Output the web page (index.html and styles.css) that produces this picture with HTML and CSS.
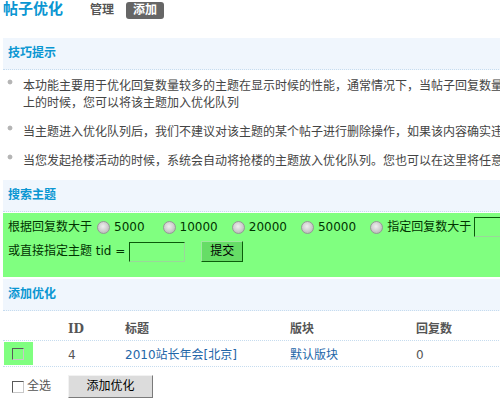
FILE: index.html
```html
<!DOCTYPE html>
<html lang="zh-CN">
<head>
<meta charset="utf-8">
<title>帖子优化</title>
<link rel="stylesheet" href="styles.css">
</head>
<body>
<div class="page">
  <div class="topbar">
    <h3 class="title">帖子优化</h3>
    <ul class="tabs">
      <li><a class="tab" href="#">管理</a></li>
      <li><a class="tab current" href="#">添加</a></li>
    </ul>
  </div>

  <div class="panel-head">技巧提示</div>
  <ul class="tips">
    <li>本功能主要用于优化回复数量较多的主题在显示时候的性能，通常情况下，当帖子回复数量在 10000 以<br>上的时候，您可以将该主题加入优化队列</li>
    <li>当主题进入优化队列后，我们不建议对该主题的某个帖子进行删除操作，如果该内容确实违规，建议采用屏蔽的方式处理</li>
    <li>当您发起抢楼活动的时候，系统会自动将抢楼的主题放入优化队列。您也可以在这里将任意主题加入优化队列</li>
  </ul>

  <div class="panel-head">搜索主题</div>
  <form class="search">
    <div class="search-row">
      <span>根据回复数大于</span>
      <label class="opt opt-first"><input type="radio" name="n" class="radio">5000</label>
      <label class="opt"><input type="radio" name="n" class="radio">10000</label>
      <label class="opt"><input type="radio" name="n" class="radio">20000</label>
      <label class="opt"><input type="radio" name="n" class="radio">50000</label>
      <label class="opt"><input type="radio" name="n" class="radio">指定回复数大于</label>
      <input type="text" class="field field-num">
    </div>
    <div class="search-row search-row-2">
      <span>或直接指定主题 tid =</span>
      <input type="text" class="field">
      <button type="button" class="btn-submit">提交</button>
    </div>
  </form>

  <div class="panel-head panel-add">添加优化</div>
  <div class="list">
    <div class="row row-head">
      <div class="c c-check"></div>
      <div class="c c-id">ID</div>
      <div class="c c-title">标题</div>
      <div class="c c-forum">版块</div>
      <div class="c c-replies">回复数</div>
    </div>
    <div class="row row-data">
      <div class="c c-check"><span class="check-cell"><input type="checkbox" class="check"></span></div>
      <div class="c c-id">4</div>
      <div class="c c-title"><a href="#" class="link">2010站长年会[北京]</a></div>
      <div class="c c-forum"><a href="#" class="link">默认版块</a></div>
      <div class="c c-replies">0</div>
    </div>
  </div>

  <div class="actions">
    <label class="all"><input type="checkbox" class="check check-white">全选</label>
    <button type="button" class="btn-add">添加优化</button>
  </div>
</div>
</body>
</html>
```
FILE: styles.css
```css
html, body {
  margin: 0;
  padding: 0;
  overflow: hidden;
  background: #fff;
}

body {
  font-family: "DejaVu Sans", "Noto Sans CJK SC", sans-serif;
  font-size: 12px;
  line-height: 17px;
  color: #444;
}

.page {
  width: 700px;
  padding: 0 3px;
}

/* top bar */
.topbar {
  display: flex;
  align-items: flex-start;
  height: 20px;
  margin-bottom: 18px;
}

.title {
  margin: 0 20px 0 0;
  font-size: 15px;
  line-height: 18px;
  font-weight: bold;
  color: #0a96d2;
}

.tabs {
  display: flex;
  gap: 5px;
  list-style: none;
  margin: 2px 0 0;
  padding: 0;
}

.tab {
  display: block;
  padding: 0 7px;
  line-height: 17px;
  font-weight: bold;
  color: #555;
  text-decoration: none;
  border-radius: 3px;
}

.tab.current {
  background: #666;
  color: #fff;
}

/* panel headers */
.panel-head {
  height: 31px;
  line-height: 31px;
  padding-left: 5px;
  background: #f0f6fd;
  border-bottom: 1px dotted #c6dcef;
  color: #0a96d2;
  font-weight: bold;
}

.panel-add {
  margin-top: 2px;
}

/* tips */
.tips {
  list-style: none;
  margin: 0;
  padding: 2px 0 4px;
  color: #444;
}

.tips li {
  padding: 6px 0 6px 20px;
  line-height: 17px;
  white-space: nowrap;
  background: radial-gradient(circle, #b5b5b5 2px, rgba(181,181,181,0) 2.8px) no-repeat 4px 7px / 6px 6px;
}

/* search */
.search {
  margin: 1px 0 0;
  padding: 3px 5px 14px;
  background: #80ff80;
  color: #030;
}

.search-row {
  display: flex;
  align-items: center;
  height: 22px;
  white-space: nowrap;
}

.search-row-2 {
  height: 23px;
  margin-top: 2px;
}

.opt {
  display: flex;
  align-items: center;
  margin-left: 14px;
}

.opt-first {
  margin-left: 5px;
  margin-right: 4px;
}

.radio {
  appearance: none;
  -webkit-appearance: none;
  box-sizing: border-box;
  width: 13px;
  height: 13px;
  margin: 0 4px 0 0;
  border-radius: 50%;
  border: 1px solid #979797;
  background: radial-gradient(circle at 45% 40%, #eeeeee 0, #d2d2d2 45%, #a9a9a9 100%);
}

.field {
  box-sizing: border-box;
  width: 56px;
  height: 20px;
  margin: 0 0 0 4px;
  padding: 0 2px;
  border: 1px solid;
  border-color: #0a5a0a #9ad89a #9ad89a #0a5a0a;
  background: #80ff80;
  font: inherit;
}

.field-num {
  margin-left: 3px;
}

.btn-submit {
  box-sizing: border-box;
  width: 42px;
  height: 21px;
  margin-left: 16px;
  padding: 0;
  border: 1px solid;
  border-color: #9fe89f #0b5d0b #0b5d0b #9fe89f;
  background: #66dd66;
  color: #000;
  font: inherit;
}

/* list */
.row {
  display: flex;
  border-bottom: 1px dotted #c6dcef;
}

.c {
  box-sizing: border-box;
  flex: none;
}

.row-head .c {
  padding: 10px 0 2px;
  font-weight: bold;
  color: #555;
}

.row-head .c-id {
  font-family: "DejaVu Serif", "Noto Sans CJK SC", serif;
}

.row-data .c {
  padding: 6px 0 2px;
  color: #555;
}

.row-data .c-check {
  padding: 1px 0;
  display: flex;
}

.c-check { width: 65px; }
.c-id { width: 57px; }
.c-title { width: 165px; }
.c-forum { width: 126px; }
.c-replies { flex: 1; }

.check-cell {
  display: flex;
  align-items: center;
  width: 29px;
  height: 23px;
  margin-left: 1px;
  padding-left: 8px;
  box-sizing: border-box;
  background: #80ff80;
}

.check {
  appearance: none;
  -webkit-appearance: none;
  box-sizing: border-box;
  width: 12px;
  height: 12px;
  margin: 0;
  border: 1px solid;
  border-color: #5a5a5a #c8c8c8 #c8c8c8 #5a5a5a;
  background: transparent;
}

.check-white {
  background: #fff;
  margin-right: 3px;
}

.link {
  color: #2366a8;
  text-decoration: none;
}

/* actions */
.actions {
  display: flex;
  align-items: center;
  margin-top: 8px;
  padding-left: 9px;
}

.all {
  display: flex;
  align-items: center;
  width: 56px;
  color: #555;
}

.btn-add {
  box-sizing: border-box;
  width: 85px;
  height: 23px;
  padding: 0;
  border: 1px solid;
  border-color: #f2f2f2 #7a7a7a #7a7a7a #f2f2f2;
  background: #dcdcdc;
  color: #000;
  font: inherit;
}
```
